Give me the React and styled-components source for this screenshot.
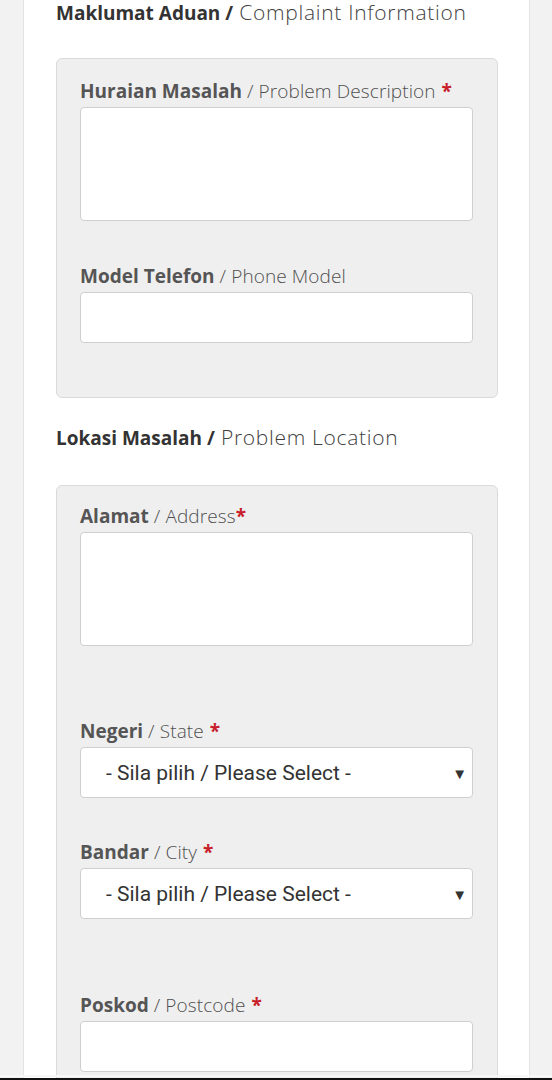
import React from "react";
import styled, { createGlobalStyle } from "styled-components";

const GlobalStyle = createGlobalStyle`
  html, body {
    margin: 0;
    padding: 0;
    background: #f2f2f2;
    font-family: "Open Sans", Lato, sans-serif;
    overflow: hidden;
  }
`;

const Page = styled.div`
  height: 1080px;
  overflow: hidden;
`;

const Column = styled.div`
  margin: 0 22px 0 23px;
  background: #fff;
  border-left: 1px solid #e4e4e4;
  border-right: 1px solid #e4e4e4;
  padding: 0 31px 0 32px;
  min-height: 1100px;
`;

const SectionTitle = styled.h3`
  height: 24px;
  margin: ${(p) => p.top}px 0 ${(p) => p.bottom}px;
  font-size: 21px;
  line-height: 24px;
  font-weight: 300;
  letter-spacing: 0.7px;
  color: #3f3f3f;
  white-space: nowrap;

  b {
    font-size: 19px;
    letter-spacing: 0;
    font-weight: 700;
    color: #333;
  }
`;

const Panel = styled.div`
  background: #efefef;
  border: 1px solid #dadada;
  border-radius: 6px;
  padding: ${(p) => p.top}px 24px ${(p) => p.bottom}px 23px;
`;

const Field = styled.div`
  margin-top: ${(p) => p.gap || 0}px;
`;

const Label = styled.label`
  display: block;
  height: 26px;
  line-height: 26px;
  margin-bottom: 3px;
  font-size: 19px;
  font-weight: 300;
  letter-spacing: 0.1px;
  color: #4f4f4f;

  b {
    letter-spacing: 0;
    font-weight: 700;
    color: #555;
  }
`;

const Star = styled.span`
  color: #c8202b;
  font-weight: 700;
  margin-left: ${(p) => (p.tight ? 0 : 6)}px;
`;

const TextArea = styled.textarea`
  display: block;
  box-sizing: border-box;
  width: 100%;
  height: 114px;
  border: 1px solid #cfcfcf;
  border-radius: 4px;
  background: #fff;
  resize: none;
`;

const Input = styled.input`
  display: block;
  box-sizing: border-box;
  width: 100%;
  height: 51px;
  border: 1px solid #cfcfcf;
  border-radius: 4px;
  background: #fff;
`;

const Select = styled.div`
  box-sizing: border-box;
  height: 51px;
  border: 1px solid #cfcfcf;
  border-radius: 4px;
  background: #fff;
  display: flex;
  align-items: center;
  justify-content: space-between;
  padding: 0 5px 0 25px;
  font-family: Roboto, "Liberation Sans", sans-serif;
  font-size: 21px;
  color: #333;
`;

const Arrow = styled.span`
  font-size: 15px;
  color: #333;
  padding-top: 2px;
`;

const NavEdge = styled.div`
  position: fixed;
  left: 0;
  right: 0;
  bottom: 0;
  height: 2px;
  background: #111;
  box-shadow: 0 -3px 0 #f7f7f7;
`;

const Dropdown = () => (
  <Select>
    <span>- Sila pilih / Please Select -</span>
    <Arrow>▼</Arrow>
  </Select>
);

export default function App() {
  return (
    <Page>
      <GlobalStyle />
      <Column>
        <SectionTitle top={0} bottom={34}>
          <b>Maklumat Aduan /</b> Complaint Information
        </SectionTitle>
        <Panel top={19} bottom={54}>
          <Field>
            <Label>
              <b>Huraian Masalah</b> / Problem Description<Star>*</Star>
            </Label>
            <TextArea />
          </Field>
          <Field gap={42}>
            <Label>
              <b>Model Telefon</b> / Phone Model
            </Label>
            <Input />
          </Field>
        </Panel>
        <SectionTitle top={27} bottom={36}>
          <b>Lokasi Masalah /</b> Problem Location
        </SectionTitle>
        <Panel top={17} bottom={54}>
          <Field>
            <Label>
              <b>Alamat</b> / Address<Star tight>*</Star>
            </Label>
            <TextArea />
          </Field>
          <Field gap={72}>
            <Label>
              <b>Negeri</b> / State<Star>*</Star>
            </Label>
            <Dropdown />
          </Field>
          <Field gap={41}>
            <Label>
              <b>Bandar</b> / City<Star>*</Star>
            </Label>
            <Dropdown />
          </Field>
          <Field gap={73}>
            <Label>
              <b>Poskod</b> / Postcode<Star>*</Star>
            </Label>
            <Input />
          </Field>
        </Panel>
      </Column>
      <NavEdge />
    </Page>
  );
}
